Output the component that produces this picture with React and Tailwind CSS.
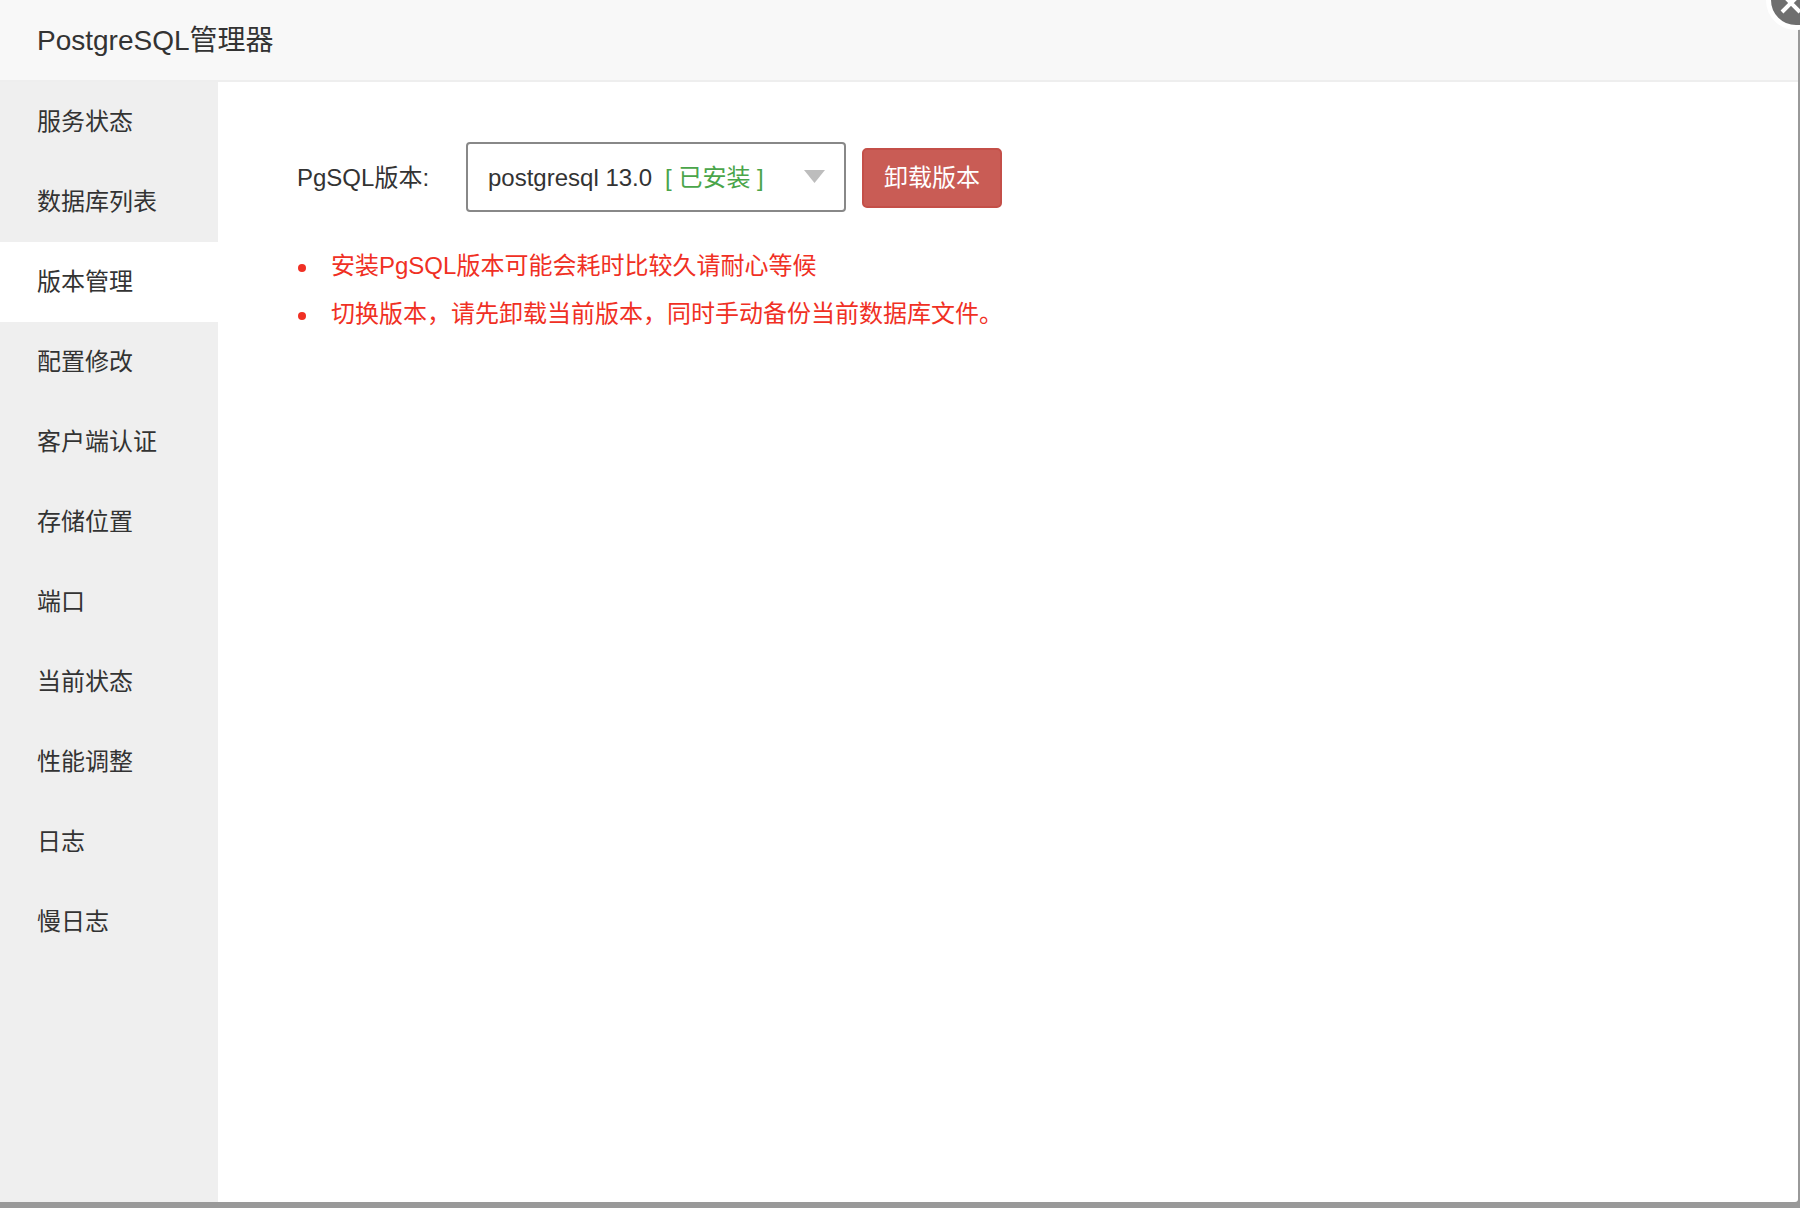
const menus = ['服务状态', '数据库列表', '版本管理', '配置修改', '客户端认证', '存储位置', '端口', '当前状态', '性能调整', '日志', '慢日志'];
const tips = ['安装PgSQL版本可能会耗时比较久请耐心等候', '切换版本，请先卸载当前版本，同时手动备份当前数据库文件。'];

export default function App() {
    return (
        <div className="relative h-[1208px] w-[1800px] overflow-hidden bg-[#999999] font-['Liberation_Sans','Noto_Sans_CJK_SC',sans-serif] text-[#333333]">
            <div className="flex h-[1202px] w-[1798px] flex-col rounded-br-[3px] bg-white">
                <div className="flex h-[82px] shrink-0 items-center border-b-2 border-[#eeeeee] bg-[#f8f8f8] pl-[37px] pt-[2px] text-[28px]">
                    PostgreSQL管理器
                </div>
                <div className="flex flex-1">
                    <div className="w-[218px] shrink-0 bg-[#efefef]">
                        {menus.map((item) => (
                            <div
                                key={item}
                                className={`flex h-[80px] items-center pl-[37px] text-[24px] ${item === '版本管理' ? 'bg-white' : ''}`}
                            >
                                {item}
                            </div>
                        ))}
                    </div>
                    <div className="flex-1 pl-[79px] pt-[60px]">
                        <div className="flex items-center">
                            <span className="w-[169px] pt-[2px] text-[24px]">PgSQL版本:</span>
                            <div className="relative flex h-[70px] w-[380px] items-center rounded-[4px] border-2 border-[#888888] pl-[20px] pt-[2px] text-[24px]">
                                <span>postgresql 13.0</span>
                                <span className="ml-[13px] text-[#4aa54a]">[ 已安装 ]</span>
                                <svg className="absolute left-[336px] top-[26px]" width="21" height="13" viewBox="0 0 21 13">
                                    <path d="M0 0H21L10.5 13Z" fill="#bdbdbd" />
                                </svg>
                            </div>
                            <button className="ml-4 mt-[2px] h-[60px] w-[140px] rounded-[5px] border-2 border-[#c44f48] bg-[#c95c55] text-[24px] text-white">
                                卸载版本
                            </button>
                        </div>
                        <ul className="mt-[30px]">
                            {tips.map((tip) => (
                                <li key={tip} className="flex h-[48px] items-center text-[24px] text-[#f03024]">
                                    <span className="ml-[1px] mr-[25px] mt-[4px] h-[8px] w-[8px] rounded-full bg-[#f03024]" />
                                    {tip}
                                </li>
                            ))}
                        </ul>
                    </div>
                </div>
            </div>
            <div className="absolute left-[1766px] top-[-30px] flex h-[60px] w-[60px] items-center justify-center rounded-full border-[5px] border-white bg-[#6f6f6f]">
                <svg width="34" height="34" viewBox="0 0 34 34" stroke="#ffffff" strokeWidth="4">
                    <path d="M3 11L21 29M21 11L3 29" />
                </svg>
            </div>
        </div>
    );
}
